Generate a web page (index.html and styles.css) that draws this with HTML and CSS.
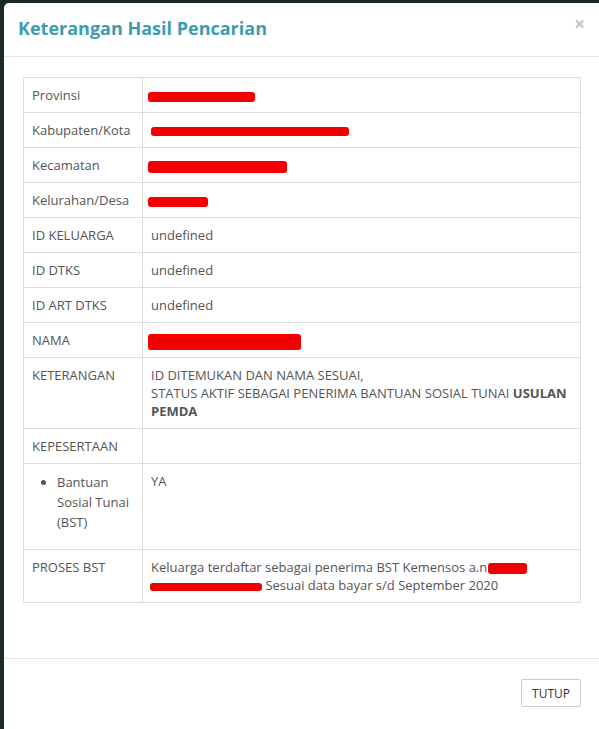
FILE: index.html
```html
<!DOCTYPE html>
<html lang="id">
<head>
<meta charset="utf-8">
<title>Keterangan Hasil Pencarian</title>
<link rel="stylesheet" href="styles.css">
</head>
<body>
<div class="modal">
  <div class="modal-header">
    <h4 class="modal-title">Keterangan Hasil Pencarian</h4>
    <span class="close">&times;</span>
  </div>
  <div class="modal-body">
    <table class="info">
      <colgroup><col class="c1"><col class="c2"></colgroup>
      <tr><td>Provinsi</td><td><span class="redact r-prov"></span></td></tr>
      <tr><td>Kabupaten/Kota</td><td><span class="redact r-kab"></span></td></tr>
      <tr><td>Kecamatan</td><td><span class="redact r-kec"></span></td></tr>
      <tr><td>Kelurahan/Desa</td><td><span class="redact r-kel"></span></td></tr>
      <tr><td>ID KELUARGA</td><td>undefined</td></tr>
      <tr><td>ID DTKS</td><td>undefined</td></tr>
      <tr><td>ID ART DTKS</td><td>undefined</td></tr>
      <tr><td>NAMA</td><td><span class="redact r-nama"></span></td></tr>
      <tr><td>KETERANGAN</td><td>ID DITEMUKAN DAN NAMA SESUAI,<br>STATUS AKTIF SEBAGAI PENERIMA BANTUAN SOSIAL TUNAI <b>USULAN PEMDA</b></td></tr>
      <tr><td>KEPESERTAAN</td><td></td></tr>
      <tr><td><ul class="list"><li>Bantuan Sosial Tunai (BST)</li></ul></td><td>YA</td></tr>
      <tr><td>PROSES BST</td><td>Keluarga terdaftar sebagai penerima BST Kemensos a.n<span class="redact r-an1"></span><br><span class="redact r-an2"></span> Sesuai data bayar s/d September 2020</td></tr>
    </table>
  </div>
  <div class="modal-footer">
    <button class="btn">TUTUP</button>
  </div>
</div>
</body>
</html>
```
FILE: styles.css
```css
html, body {
  margin: 0;
  padding: 0;
  height: 100%;
  overflow: hidden;
}
body {
  background: #1c2a25;
  font-family: "Open Sans", "Noto Sans", sans-serif;
  font-size: 13px;
  color: #555;
  padding: 3px 0 0 4px;
  box-sizing: border-box;
}
.modal {
  background: #fff;
  border-radius: 5px 0 0 0;
  width: 596px;
  height: 760px;
}
.modal-header {
  display: flex;
  align-items: center;
  justify-content: space-between;
  padding: 13px 15px 15px 14px;
  border-bottom: 1px solid #e5e5e5;
  height: 25px;
}
.modal-title {
  margin: 0;
  font-size: 18px;
  font-weight: 700;
  color: #3a9db1;
  line-height: 25px;
}
.close {
  font-size: 19px;
  font-weight: 700;
  color: #c4c4c4;
  line-height: 1;
  margin-top: -8px;
}
.modal-body {
  padding: 20px 15px 55px 19px;
}
.info {
  width: 558px;
  table-layout: fixed;
  border-collapse: collapse;
  border: 1px solid #ddd;
}
.c1 { width: 119px; }
.info td {
  border: 1px solid #ddd;
  padding: 8px;
  line-height: 18px;
  vertical-align: top;
}
.info b { font-weight: 700; color: #555; }
.list {
  margin: 0 0 9px 0;
  padding-left: 25px;
  line-height: 20px;
  list-style: disc;
}
.redact {
  display: inline-block;
  background: #f20000;
  border-radius: 3px;
  vertical-align: middle;
}
.r-prov { width: 107px; height: 10px; margin-left: -3px; }
.r-kab { width: 198px; height: 9px; }
.r-kec { width: 139px; height: 12px; margin-left: -3px; }
.r-kel { width: 60px; height: 10px; margin-left: -3px; }
.r-nama { width: 153px; height: 16px; margin: -3px 0 -3px -3px; }
.r-an1 { width: 39px; height: 11px; margin-left: 1px; }
.r-an2 { width: 112px; height: 8px; margin-left: -1px; }
.modal-footer {
  border-top: 1px solid #e5e5e5;
  padding: 20px 19px 20px 19px;
  display: flex;
  justify-content: flex-end;
}
.btn {
  font-family: "Open Sans", "Noto Sans", sans-serif;
  font-size: 12px;
  color: #333;
  background: #fff;
  border: 1px solid #ccc;
  border-radius: 2px;
  padding: 4px 9px;
  line-height: 17px;
  height: 28px;
  width: 60px;
}
```
